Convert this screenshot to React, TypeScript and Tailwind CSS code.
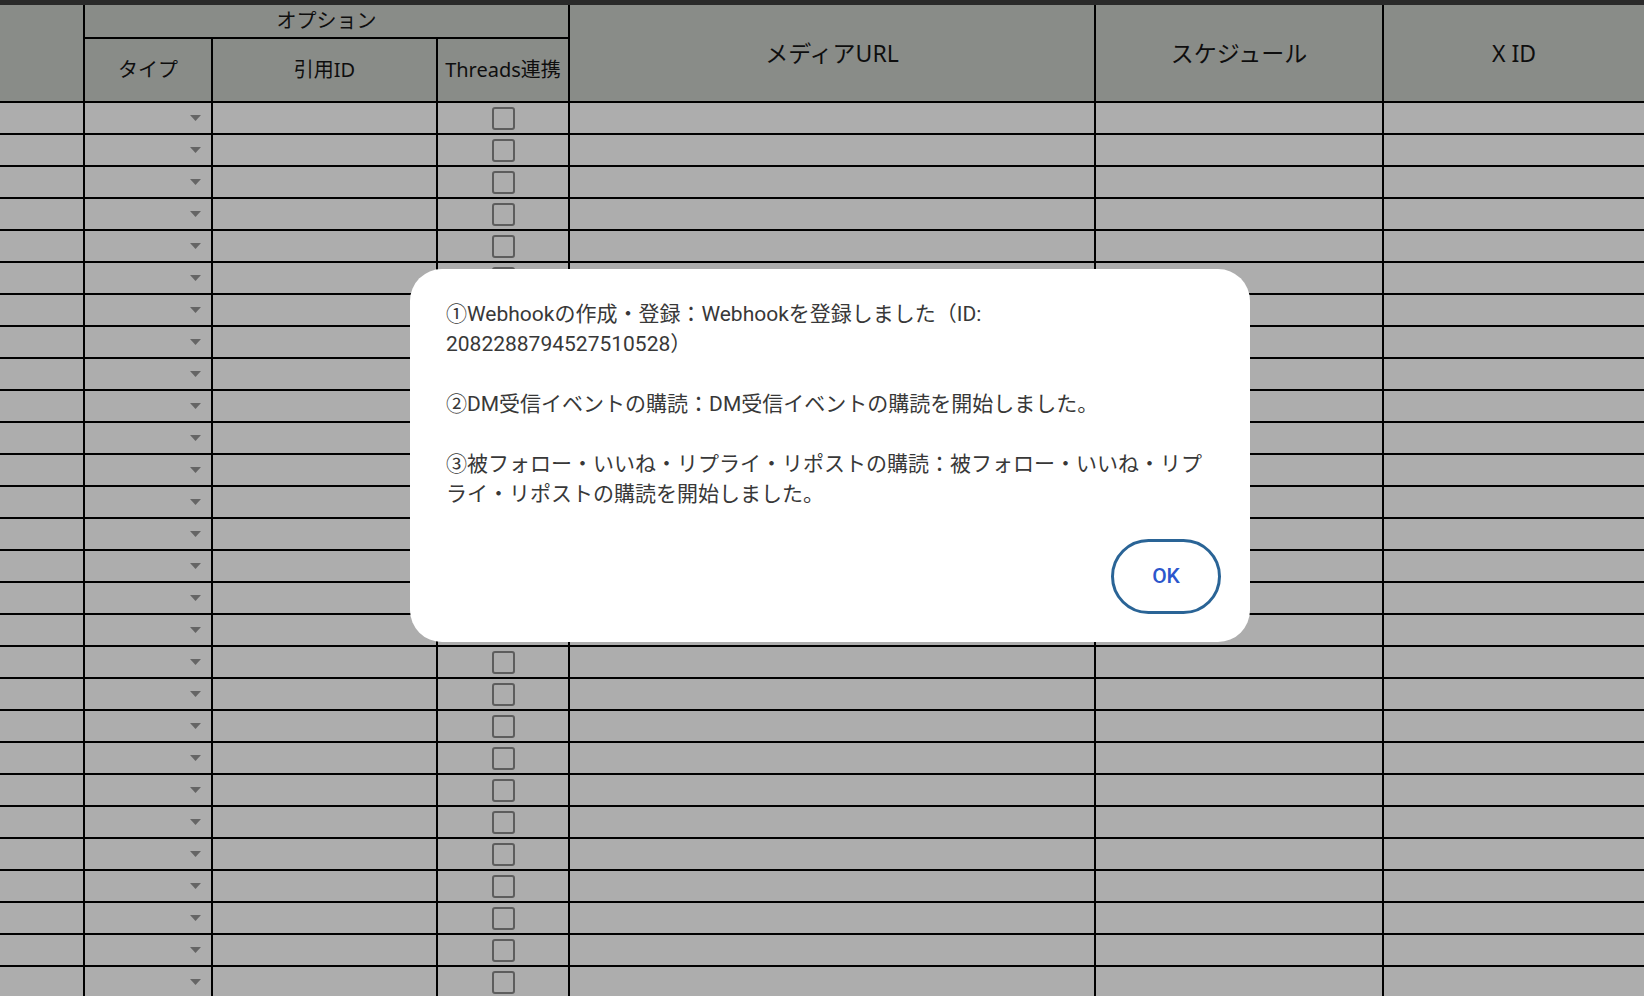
import React from "react";

const ROWS = 28;

function Arrow() {
  return (
    <svg width="11" height="6" viewBox="0 0 11 6" className="block">
      <path d="M0 0 L11 0 L5.5 6 Z" fill="#969696" />
    </svg>
  );
}

function SheetRow() {
  return (
    <div className="flex h-[32px] border-b-2 border-black bg-white">
      <div className="w-[85px] border-r-2 border-black" />
      <div className="flex w-[128px] items-center justify-end border-r-2 border-black pr-[10px]">
        <Arrow />
      </div>
      <div className="w-[225px] border-r-2 border-black" />
      <div className="flex w-[132px] items-center justify-center border-r-2 border-black">
        <div className="h-[23px] w-[23px] rounded-[3px] border-2 border-[#8a8a8a]" />
      </div>
      <div className="w-[526px] border-r-2 border-black" />
      <div className="w-[288px] border-r-2 border-black" />
      <div className="flex-1" />
    </div>
  );
}

export default function App() {
  const message =
    "①Webhookの作成・登録：Webhookを登録しました（ID: 2082288794527510528）\n\n②DM受信イベントの購読：DM受信イベントの購読を開始しました。\n\n③被フォロー・いいね・リプライ・リポストの購読：被フォロー・いいね・リプライ・リポストの購読を開始しました。";

  return (
    <div className="relative h-[996px] w-full overflow-hidden bg-white">
      {/* sheet */}
      <div className="h-[5px] bg-[#3f3f3f]" />
      <div
        className="flex h-[98px] border-b-2 border-black bg-[#cbcec9] text-[20px] text-[#161616]"
        style={{ fontFamily: '"Noto Sans", "Noto Sans CJK JP", sans-serif' }}
      >
        <div className="w-[85px] border-r-2 border-black" />
        <div className="flex w-[485px] flex-col border-r-2 border-black">
          <div className="flex h-[34px] items-center justify-center border-b-2 border-black">
            オプション
          </div>
          <div className="flex flex-1">
            <div className="flex w-[128px] items-center justify-center border-r-2 border-black">
              タイプ
            </div>
            <div className="flex w-[225px] items-center justify-center border-r-2 border-black">
              引用ID
            </div>
            <div className="flex flex-1 items-center justify-center whitespace-nowrap">
              Threads連携
            </div>
          </div>
        </div>
        <div className="flex w-[526px] items-center justify-center border-r-2 border-black text-[23px]">
          メディアURL
        </div>
        <div className="flex w-[288px] items-center justify-center border-r-2 border-black text-[23px]">
          スケジュール
        </div>
        <div className="flex flex-1 items-center justify-center text-[23px]">X ID</div>
      </div>
      {Array.from({ length: ROWS }).map((_, i) => (
        <SheetRow key={i} />
      ))}

      {/* modal */}
      <div className="absolute inset-0 bg-black/[0.32]" />
      <div
        className="absolute left-[410px] top-[269px] w-[840px] rounded-[32px] bg-white pb-[28px] pl-[36px] pr-[29px] pt-[30px]"
        style={{ fontFamily: 'Roboto, "Noto Sans CJK JP", sans-serif' }}
      >
        <p className="whitespace-pre-wrap pr-[6px] text-[21px] leading-[30px] text-[#383838]">
          {message}
        </p>
        <div className="mt-[30px] flex justify-end">
          <button className="h-[75px] w-[110px] rounded-full border-[3px] border-[#2a6496] bg-white text-[21px] font-medium text-[#2c56cc]">
            OK
          </button>
        </div>
      </div>
    </div>
  );
}
